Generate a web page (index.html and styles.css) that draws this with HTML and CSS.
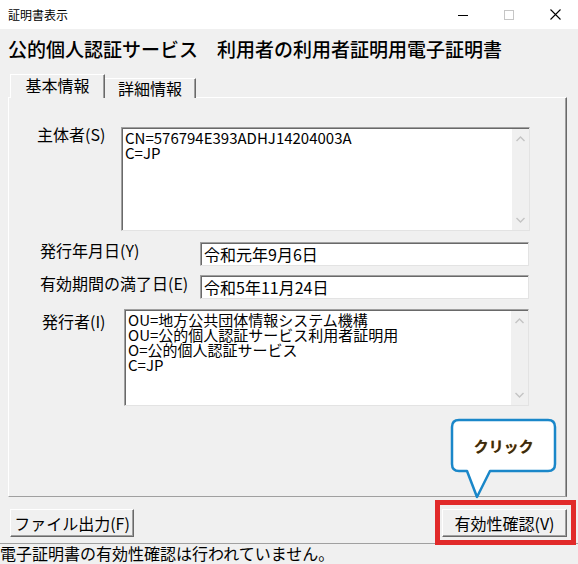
FILE: index.html
```html
<!DOCTYPE html>
<html>
    <head>
        <meta charset="utf-8">
        <title>証明書表示</title>
        <link rel="stylesheet" href="styles.css">
    </head>
    <body>
        <div class="window">
            <div class="titlebar">
                <span class="title">証明書表示</span>
                <div class="controls">
                    <span class="ctl"><svg width="10" height="10" viewBox="0 0 10 10"><path d="M0 5.5H10" stroke="#000" stroke-width="1"/></svg></span>
                    <span class="ctl"><svg width="10" height="10" viewBox="0 0 10 10"><rect x="0.5" y="0.5" width="9" height="9" fill="none" stroke="#c6c6c6"/></svg></span>
                    <span class="ctl"><svg width="11" height="11" viewBox="0 0 11 11"><path d="M0.5 0.5L10.5 10.5M10.5 0.5L0.5 10.5" stroke="#000" stroke-width="1.1"/></svg></span>
                </div>
            </div>

            <h1 class="heading">公的個人認証サービス　利用者の利用者証明用電子証明書</h1>

            <div class="tabs">
                <div class="tab active">基本情報</div>
                <div class="tab">詳細情報</div>
            </div>

            <div class="panel">
                <div class="row row-subject">
                    <label class="label">主体者(S)</label>
                    <div class="field area">
                        <div class="area-text">CN=576794E393ADHJ14204003A<br>C=JP</div>
                        <div class="scroll">
                            <svg width="9" height="6" viewBox="0 0 9 6"><path d="M0.5 5L4.5 1L8.5 5" fill="none" stroke="#c4c4c4" stroke-width="1.4"/></svg>
                            <svg width="9" height="6" viewBox="0 0 9 6"><path d="M0.5 1L4.5 5L8.5 1" fill="none" stroke="#c4c4c4" stroke-width="1.4"/></svg>
                        </div>
                    </div>
                </div>
                <div class="row row-date">
                    <label class="label">発行年月日(Y)</label>
                    <div class="field input">令和元年9月6日</div>
                </div>
                <div class="row row-expire">
                    <label class="label">有効期間の満了日(E)</label>
                    <div class="field input">令和5年11月24日</div>
                </div>
                <div class="row row-issuer">
                    <label class="label">発行者(I)</label>
                    <div class="field area">
                        <div class="area-text">OU=地方公共団体情報システム機構<br>OU=公的個人認証サービス利用者証明用<br>O=公的個人認証サービス<br>C=JP</div>
                        <div class="scroll">
                            <svg width="9" height="6" viewBox="0 0 9 6"><path d="M0.5 5L4.5 1L8.5 5" fill="none" stroke="#c4c4c4" stroke-width="1.4"/></svg>
                            <svg width="9" height="6" viewBox="0 0 9 6"><path d="M0.5 1L4.5 5L8.5 1" fill="none" stroke="#c4c4c4" stroke-width="1.4"/></svg>
                        </div>
                    </div>
                </div>
            </div>

            <div class="buttons">
                <button class="btn btn-file">ファイル出力(F)</button>
                <button class="btn btn-check">有効性確認(V)</button>
            </div>

            <div class="status">電子証明書の有効性確認は行われていません。</div>

            <!-- annotation over the screenshot -->
            <div class="callout">
                <svg width="112" height="84" viewBox="0 0 112 84">
                    <path d="M11 3H100Q107 3 107 10V47Q107 54 100 54H42L29 80L19 54H11Q4 54 4 47V10Q4 3 11 3Z" fill="#fff" stroke="#1a87c9" stroke-width="2.5" stroke-linejoin="round"/>
                </svg>
                <span class="callout-text">クリック</span>
            </div>
            <div class="highlight"></div>
        </div>
    </body>
</html>
```

FILE: styles.css
```css
body{
    margin: 0;
    background: #f0f0f0;
    font-family: "Noto Sans CJK JP", "Noto Sans", sans-serif;
    color: #000000;
}

.window{
    position: relative;
    width: 578px;
    height: 564px;
    overflow: hidden;
    display: flex;
    flex-direction: column;
}

.titlebar{
    height: 29px;
    background: #ffffff;
    display: flex;
    align-items: center;
    justify-content: space-between;
    flex-shrink: 0;
}

.title{
    padding-left: 8px;
    font-size: 12px;
}

.controls{
    display: flex;
    height: 29px;
}

.ctl{
    width: 46px;
    display: flex;
    align-items: center;
    justify-content: center;
}

.heading{
    margin: 8px 0 0 8px;
    font-size: 19px;
    font-weight: 500;
    line-height: 24px;
    height: 24px;
    white-space: nowrap;
}

.tabs{
    display: flex;
    align-items: flex-end;
    margin: 13px 0 -1px 10px;
    height: 24px;
}

.tab{
    position: relative;
    width: 90px;
    height: 19px;
    line-height: 19px;
    text-align: center;
    font-size: 16px;
    border-top: 1px solid #ffffff;
    border-right: 1px solid #696969;
    box-shadow: inset -1px 0 0 #a0a0a0;
    background: #f0f0f0;
}

.tab.active{
    z-index: 1;
    width: 93px;
    height: 23px;
    line-height: 21px;
    border-left: 1px solid #ffffff;
}

.panel{
    margin: 0 11px 0 8px;
    height: 398px;
    border-top: 1px solid #ffffff;
    border-left: 1px solid #ffffff;
    border-right: 1px solid #696969;
    border-bottom: 1px solid #a0a0a0;
    box-shadow: inset -1px 0 0 #a0a0a0;
    display: flex;
    flex-direction: column;
    flex-shrink: 0;
}

.row{
    display: flex;
    align-items: flex-start;
}

.label{
    font-size: 16px;
    line-height: 16px;
    white-space: nowrap;
    flex-shrink: 0;
}

.field{
    background: #ffffff;
    border-top: 1px solid #a0a0a0;
    border-left: 1px solid #a0a0a0;
    border-right: 1px solid #e3e3e3;
    border-bottom: 1px solid #e3e3e3;
    box-shadow: inset 1px 1px 0 #696969;
    box-sizing: border-box;
    font-size: 16px;
}

.row-subject{ margin-top: 29px; }
.row-subject .label{ width: 84px; padding: 0 0 0 28px; margin-top: -1px; }
.row-subject .field{ width: 409px; height: 104px; }

.row-date{ margin-top: 11px; }
.row-date .label{ width: 160px; padding-left: 31px; margin-top: 0px; }
.row-date .field{ width: 329px; height: 24px; }

.row-expire{ margin-top: 9px; }
.row-expire .label{ width: 160px; padding-left: 31px; margin-top: 0px; }
.row-expire .field{ width: 329px; height: 24px; }

.row-issuer{ margin-top: 10px; }
.row-issuer .label{ width: 82px; padding-left: 33px; margin-top: 4px; }
.row-issuer .field{ width: 405px; height: 97px; }

.input{
    padding: 0 0 0 3px;
    line-height: 22px;
}

.area{
    display: flex;
}

.area-text{
    flex: 1;
    padding: 2px 0 0 3px;
    font-size: 15px;
    line-height: 15px;
    white-space: nowrap;
}

.scroll{
    width: 17px;
    margin: 1px 0 0 0;
    background: #f0f0f0;
    display: flex;
    flex-direction: column;
    justify-content: space-between;
    align-items: center;
    padding: 7px 0 7px 0;
}

.buttons{
    display: flex;
    justify-content: space-between;
    margin: 12px 11px 0 10px;
}

.btn{
    font-family: inherit;
    font-size: 16px;
    height: 28px;
    padding: 0;
    background: #f0f0f0;
    border-top: 1px solid #ffffff;
    border-left: 1px solid #ffffff;
    border-right: 1px solid #696969;
    border-bottom: 1px solid #696969;
    box-shadow: inset -1px -1px 0 #a0a0a0;
    line-height: 24px;
}

.btn-file{ width: 124px; }
.btn-check{ width: 125px; }

.status{
    margin-top: 6px;
    border-top: 1px solid #a0a0a0;
    font-size: 16px;
    line-height: 18px;
    white-space: nowrap;
}

.callout{
    position: absolute;
    left: 448px;
    top: 417px;
    width: 112px;
    height: 84px;
}

.callout svg{
    display: block;
}

.callout-text{
    position: absolute;
    left: 4px;
    top: 3px;
    width: 103px;
    height: 51px;
    display: flex;
    align-items: center;
    justify-content: center;
    font-size: 15px;
    font-weight: bold;
    color: #3a2a10;
    text-shadow: 0.6px 0 0 #d89a3a;
}

.highlight{
    position: absolute;
    left: 435px;
    top: 500px;
    width: 131px;
    height: 35px;
    border: 5px solid #e12a2a;
}
```
